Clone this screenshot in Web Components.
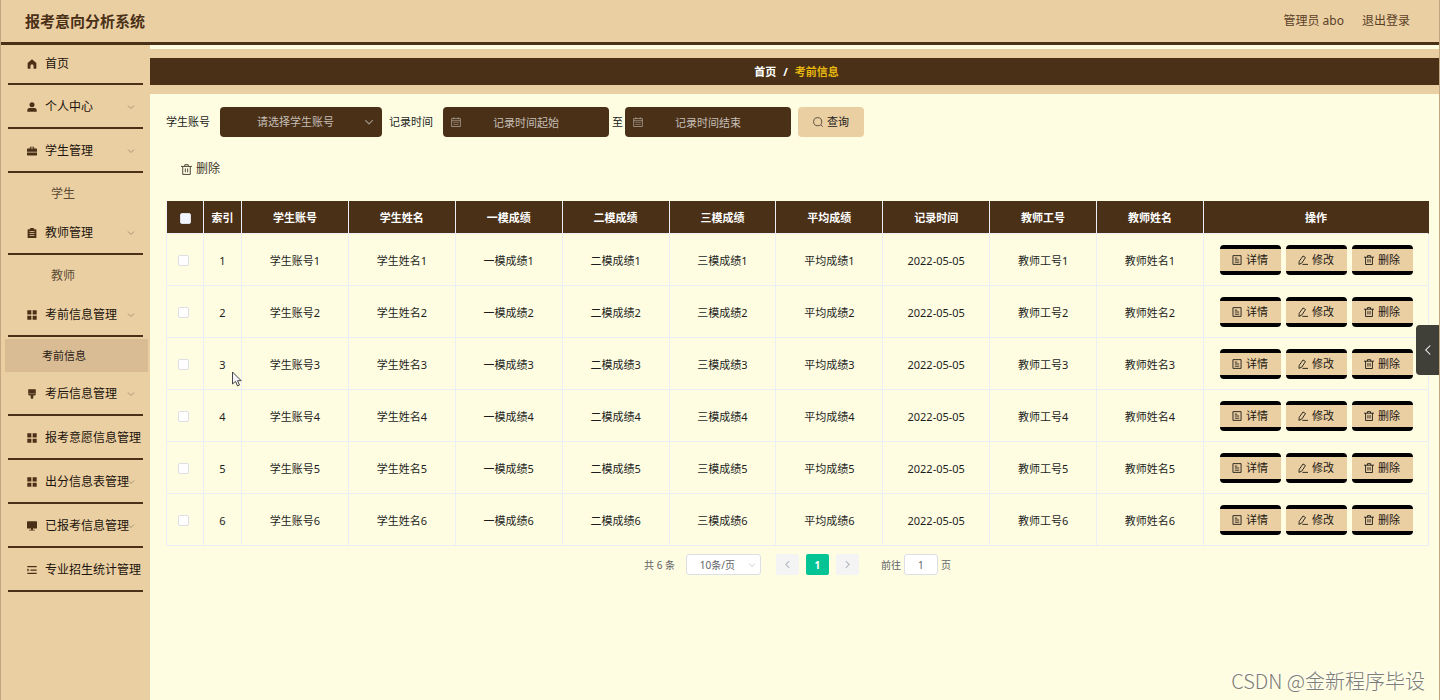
<!DOCTYPE html>
<html lang="zh-CN">
<head>
<meta charset="utf-8">
<meta name="viewport" content="width=device-width, initial-scale=1">
<title>报考意向分析系统</title>
<style>
  :root {
    --tan: #eacfa3;
    --tan-dark: #d9bc94;
    --brown: #4a3017;
    --cream: #fefde2;
    --line: #ebeef5;
    --control-line: #dcdfe6;
    --edge: rgba(75, 48, 23, .25);
  }
  * { box-sizing: border-box; }
  body {
    margin: 0;
    font: 11px/16px "Noto Sans", "Noto Sans CJK SC", sans-serif;
    color: #1d1d1d;
    background: var(--cream);
  }
</style>
</head>
<body>
<admin-app></admin-app>

<script>
const define = (name, html, setup) => {
  const template = document.createElement('template');
  template.innerHTML = `<style>*{box-sizing:border-box} button,input,select{font:inherit;color:inherit;margin:0} button{cursor:pointer} a{color:inherit;text-decoration:none}</style>` + html;
  customElements.define(name, class extends HTMLElement {
    connectedCallback() {
      if (this.shadowRoot) return;
      this.attachShadow({ mode: 'open' }).append(template.content.cloneNode(true));
      if (setup) setup(this, this.shadowRoot);
    }
  });
};

/* Icons: 16-unit grid; "f" shapes are filled, the others are stroked. */
const ICONS = {
  home: ['f', '<path d="M8 .5 1 6.500v8a1 1 0 0 0 1 1h3.500V11a2.500 2.500 0 0 1 5 0v4.500H14a1 1 0 0 0 1-1v-8z"/>'],
  user: ['f', '<circle cx="8" cy="4.500" r="4"/><path d="M.5 15.500V13A3.500 3.500 0 0 1 4 9.500h8a3.500 3.500 0 0 1 3.500 3.500v2.500z"/>'],
  briefcase: ['f', '<path fill-rule="evenodd" d="M4.500 4V2a1 1 0 0 1 1-1h5a1 1 0 0 1 1 1v2H15a1 1 0 0 1 1 1v4H0V5a1 1 0 0 1 1-1zM6 4h4V2.500H6z"/><path d="M0 10.500h16V14a1 1 0 0 1-1 1H1a1 1 0 0 1-1-1z"/>'],
  clipboard: ['f', '<path fill-rule="evenodd" d="M5 0h6v2h3a1 1 0 0 1 1 1v12a1 1 0 0 1-1 1H2a1 1 0 0 1-1-1V3a1 1 0 0 1 1-1h3zM4 5v1.200h8V5zm0 3.200v1.300h8V8.200zm0 3.300v1.300h8v-1.300z"/>'],
  grid: ['f', '<path d="M.5.5h6.500v6.500H.5zM9 .5h6.500v6.500H9zM.5 9h6.500v6.500H.5zM9 9h6.500v6.500H9z"/>'],
  brush: ['f', '<path d="M2 .5h12v8a2 2 0 0 1-2 2h-2v4a1 1 0 0 1-1 1H7a1 1 0 0 1-1-1v-4H4a2 2 0 0 1-2-2z"/><path d="M3 7.500h10" stroke="#eacfa3" stroke-width=".7"/>'],
  screen: ['f', '<path d="M1 .5h14a1 1 0 0 1 1 1V11a1 1 0 0 1-1 1H9.500v1.800h3v1.500h-9v-1.500h3V12H1a1 1 0 0 1-1-1V1.500a1 1 0 0 1 1-1z"/>'],
  list: ['f', '<path d="M.5 1.500h15v2H.5zM5.500 7h10v2h-10zM.5 12.500h15v2H.5zM.5 5.500 4 8 .5 10.500z"/>'],
  down: ['s', '<path d="m2 5 6 6 6-6"/>'],
  left: ['s', '<path d="M11 2 5 8l6 6"/>'],
  right: ['s', '<path d="m5 2 6 6-6 6"/>'],
  search: ['s', '<circle cx="7.500" cy="7.500" r="6.500"/><path d="m12.500 12.500 3 3"/>'],
  trash: ['s', '<path d="M0 3.500h16M5.500 3.500v-2.500h5v2.500M2.500 3.500v11.700h11V3.500M6.300 6.500v5.500M9.700 6.500v5.500"/>'],
  doc: ['s', '<path d="M1.500 1h13v14h-13zM4.500 5h4M4.500 8h7M4.500 11.500h7"/>'],
  edit: ['s', '<path d="m2 10 6-8.500 4 2.500-6 9L1.500 15zM7 15h9"/>'],
  date: ['s', '<path d="M1 2.500h14v12.700H1zM1 6h14M4.500.5v3M11.500.5v3M4 9h2M7 9h2M10 9h2M4 12h2M7 12h2M10 12h2"/>']
};

define('ui-icon', `
  <style>
    :host { display: inline-flex; flex: none; width: 10px; height: 10px; }
    svg { width: 100%; height: 100%; overflow: visible; }
    .f { fill: currentColor; }
    .s { fill: none; stroke: currentColor; stroke-width: var(--stroke, 1.4); }
  </style>
  <svg viewBox="0 0 16 16" aria-hidden="true"></svg>`,
  (host, root) => {
    const [kind, shape] = ICONS[host.getAttribute('name')];
    const svg = root.querySelector('svg');
    svg.classList.add(kind);
    svg.innerHTML = shape;
  });

define('app-header', `
  <style>
    :host {
      display: flex; align-items: center; justify-content: space-between;
      height: 45px; padding: 0 29px 0 24px; color: var(--brown);
      background: var(--tan); border-bottom: 3px solid var(--brown);
    }
    h1 { margin: 0; font-size: 15px; line-height: 20px; font-weight: 600; }
    div { display: flex; gap: 18px; font-size: 12px; opacity: .9; }
  </style>
  <h1>报考意向分析系统</h1>
  <div><span>管理员 abo</span><a href="#logout">退出登录</a></div>`);

define('menu-item', `
  <style>
    :host { display: block; }
    a {
      position: relative; display: flex; align-items: center; gap: 8px;
      height: 44px; padding: 2px 0 0 19px; font-size: 12px; white-space: nowrap;
      color: #1c140c; border-bottom: 2px solid var(--brown);
    }
    :host([first]) a { height: 40px; padding-top: 0; }
    ui-icon { color: var(--brown); }
    .arrow { position: absolute; right: 8px; width: 8px; height: 8px; color: #8d7a5f; }
  </style>
  <a href="#"><slot></slot></a>`,
  (host, root) => {
    const link = root.querySelector('a');
    link.insertAdjacentHTML('afterbegin', `<ui-icon name="${host.getAttribute('icon')}"></ui-icon>`);
    if (host.hasAttribute('expandable')) {
      link.insertAdjacentHTML('beforeend', '<ui-icon class="arrow" name="down"></ui-icon>');
    }
  });

define('sub-item', `
  <style>
    :host { display: block; }
    a {
      display: flex; align-items: center; height: 38px; padding: 3px 0 0 43px;
      font-size: 12px; color: #5c4b36;
    }
    :host([active]) { margin: 2px -5px 0 -3px; }
    :host([active]) a {
      height: 33px; padding: 0 0 0 37px; font-size: 11px;
      color: #2b2015; background: var(--tan-dark);
    }
  </style>
  <a href="#"><slot></slot></a>`);

define('side-menu', `
  <style>
    :host { display: block; width: 149px; flex: none; background: var(--tan); }
    nav { padding: 0 7px; }
  </style>
  <nav>
    <menu-item icon="home" first>首页</menu-item>
    <menu-item icon="user" expandable>个人中心</menu-item>
    <menu-item icon="briefcase" expandable>学生管理</menu-item>
    <sub-item>学生</sub-item>
    <menu-item icon="clipboard" expandable>教师管理</menu-item>
    <sub-item>教师</sub-item>
    <menu-item icon="grid" expandable>考前信息管理</menu-item>
    <sub-item active>考前信息</sub-item>
    <menu-item icon="brush" expandable>考后信息管理</menu-item>
    <menu-item icon="grid">报考意愿信息管理</menu-item>
    <menu-item icon="grid" expandable>出分信息表管理</menu-item>
    <menu-item icon="screen" expandable>已报考信息管理</menu-item>
    <menu-item icon="list">专业招生统计管理</menu-item>
  </nav>`);

define('crumb-bar', `
  <style>
    :host {
      display: block; margin-top: 4px; padding: 9px 0; background: var(--tan);
    }
    nav {
      display: flex; justify-content: center; gap: 7px; height: 27px; padding-left: 4px;
      line-height: 27px; font-weight: 700; color: #fff; background: var(--brown);
    }
    .here { color: #e8b80e; }
  </style>
  <nav aria-label="位置"><a href="#home">首页</a><span>/</span><span class="here">考前信息</span></nav>`);

define('dark-field', `
  <style>
    :host { display: block; position: relative; width: 166px; color: #c4beb6; }
    :host([kind=select]) { width: 162px; }
    input, select {
      display: block; width: 100%; height: 30px; padding: 0 30px; border: 0; border-radius: 4px;
      text-align: center; text-align-last: center; background: var(--brown); outline: 0; appearance: none;
    }
    select { padding: 0 30px 0 19px; }
    input::placeholder { color: inherit; opacity: 1; }
    ui-icon { position: absolute; top: 10px; left: 8px; color: #a4988a; pointer-events: none; }
    :host([kind=select]) ui-icon { left: auto; right: 8px; --stroke: 1.800; }
  </style>`,
  (host, root) => {
    const text = host.getAttribute('placeholder');
    root.append(document.createRange().createContextualFragment(
      host.getAttribute('kind') === 'select'
        ? `<select aria-label="学生账号"><option>${text}</option></select><ui-icon name="down"></ui-icon>`
        : `<input type="text" aria-label="${text}" placeholder="${text}"><ui-icon name="date"></ui-icon>`));
  });

define('filter-bar', `
  <style>
    :host { display: block; }
    form { display: flex; align-items: center; flex-wrap: wrap; }
    label { display: flex; align-items: center; gap: 10px; margin-right: 7px; }
    .range { margin-right: 3px; }
    .to { gap: 2px; }
    form button {
      display: flex; align-items: center; justify-content: center; gap: 4px;
      width: 66px; height: 30px; padding: 0; border: 0; border-radius: 4px; background: var(--tan);
    }
    form button ui-icon, .remove ui-icon { color: #4a4234; }
    .remove {
      display: flex; align-items: center; gap: 4px; height: 30px; margin-top: 17px; padding: 0 15px;
      border: 0; font-size: 12px; color: #3c3529; background: none;
    }
    .remove ui-icon { width: 11px; height: 11px; }
  </style>
  <form onsubmit="return false">
    <label>学生账号<dark-field kind="select" placeholder="请选择学生账号"></dark-field></label>
    <label class="range">记录时间<dark-field placeholder="记录时间起始"></dark-field></label>
    <label class="to">至<dark-field placeholder="记录时间结束"></dark-field></label>
    <button type="submit"><ui-icon name="search"></ui-icon>查询</button>
  </form>
  <button type="button" class="remove"><ui-icon name="trash"></ui-icon>删除</button>`);

define('row-action', `
  <style>
    :host { display: block; }
    button {
      display: flex; align-items: center; justify-content: center; gap: 4px;
      width: 61px; height: 30px; padding: 0; color: #1c1712; background: var(--tan);
      border: solid #000; border-width: 4px 0; border-radius: 4px;
    }
  </style>
  <button type="button"><slot name="icon"></slot><slot></slot></button>`);

define('score-table', `
  <style>
    :host { display: block; }
    table {
      width: 100%; table-layout: fixed; border-collapse: separate; border-spacing: 0;
      text-align: center; border-left: 1px solid var(--line);
    }
    col.check { width: 37px; } col.index { width: 38px; } col.ops { width: 225px; }
    th, td { padding: 2px 0 0; border-right: 1px solid var(--line); border-bottom: 1px solid var(--line); }
    th { height: 33px; color: #fff; font-weight: 700; background: var(--brown); }
    th:last-child { border-right-color: var(--brown); }
    td { height: 52px; }
    td:last-child { padding-top: 0; }
    input {
      appearance: none; display: block; width: 11px; height: 11px; margin: 0 auto;
      border: 1px solid var(--control-line); border-radius: 2px; background: #fff;
    }
    td:first-child { padding-right: 3px; }
    th input { background: #f2f4fd; }
    .actions { display: flex; justify-content: center; gap: 5px; }
  </style>
  <table>
    <colgroup><col class="check"><col class="index"><col span="9"><col class="ops"></colgroup>
    <thead><tr><th><input type="checkbox" aria-label="全选"></th></tr></thead>
    <tbody></tbody>
  </table>`,
  (host, root) => {
    const heads = ['索引', '学生账号', '学生姓名', '一模成绩', '二模成绩', '三模成绩', '平均成绩', '记录时间', '教师工号', '教师姓名', '操作'];
    root.querySelector('thead tr').insertAdjacentHTML('beforeend', heads.map(h => `<th>${h}</th>`).join(''));
    const actions = [['doc', '详情'], ['edit', '修改'], ['trash', '删除']]
      .map(([icon, text]) => `<row-action><ui-icon slot="icon" name="${icon}"></ui-icon>${text}</row-action>`).join('');
    root.querySelector('tbody').innerHTML = [1, 2, 3, 4, 5, 6].map(n => `<tr>
      <td><input type="checkbox" aria-label="选择 ${n}"></td><td>${n}</td>` +
      heads.slice(1, -1).map(h => `<td>${h === '记录时间' ? '2022-05-05' : h + n}</td>`).join('') +
      `<td><div class="actions">${actions}</div></td></tr>`).join('');
  });

define('page-nav', `
  <style>
    :host {
      display: flex; align-items: center; justify-content: center; margin-top: 8px;
      font-size: 10px; color: #606266;
    }
    .size { position: relative; width: 75px; margin: 0 15px 0 11px; }
    select, input {
      display: block; width: 100%; height: 21px; padding: 0; border: 1px solid var(--control-line); border-radius: 3px;
      background: #fff; text-align: center; text-align-last: center; appearance: none; outline: 0;
    }
    select { padding-right: 12px; }
    .size ui-icon { position: absolute; right: 5px; top: 7px; width: 8px; height: 8px; color: #b4b8c0; }
    button {
      display: flex; align-items: center; justify-content: center;
      width: 23px; height: 21px; padding: 0; border: 0; border-radius: 2px; background: #f4f4f5; color: #b4b8c0;
      --stroke: 2;
    }
    button ui-icon { width: 9px; height: 9px; }
    .pages { display: flex; gap: 7px; margin-right: 22px; }
    .pages .on { color: #fff; font-weight: 700; background: #04c394; }
    label { display: flex; align-items: center; gap: 3px; }
    label input { width: 34px; }
  </style>
  <span>共 6 条</span>
  <div class="size"><select aria-label="每页条数"><option>10条/页</option></select><ui-icon name="down"></ui-icon></div>
  <div class="pages">
    <button type="button" aria-label="上一页"><ui-icon name="left"></ui-icon></button>
    <button type="button" class="on">1</button>
    <button type="button" aria-label="下一页"><ui-icon name="right"></ui-icon></button>
  </div>
  <label>前往<input type="text" value="1">页</label>`);

define('admin-app', `
  <style>
    :host {
      display: flex; flex-direction: column; position: relative; min-height: 100vh; overflow: hidden;
      border: solid var(--edge); border-width: 0 1px; background: var(--tan);
    }
    .body { display: flex; flex: 1; }
    main { flex: 1; min-width: 0; background: var(--cream); }
    crumb-bar { border-top: 0; }
    .content { padding: 13px 10px 0 16px; }
    score-table { margin-top: 17px; }
    .drawer {
      position: absolute; right: -1px; top: 325px; display: flex; align-items: center; justify-content: center;
      width: 24px; height: 50px; padding: 0; border: 0; border-radius: 4px 0 0 4px; color: #fff; background: #403f38;
    }
    .drawer ui-icon { width: 12px; height: 12px; }
    .mark {
      position: absolute; right: 14px; bottom: 4px; font-family: "Noto Sans CJK SC", sans-serif;
      font-size: 20px; line-height: 30px; font-weight: 300;
      color: #7d7c75; text-shadow: -1px -1px 0 #fff;
    }
    .pointer { position: absolute; left: 230px; top: 371px; width: 12px; height: 17px; }
  </style>
  <app-header></app-header>
  <div class="body">
    <side-menu></side-menu>
    <main>
      <crumb-bar></crumb-bar>
      <div class="content">
        <filter-bar></filter-bar>
        <score-table></score-table>
        <page-nav></page-nav>
      </div>
    </main>
  </div>
  <button type="button" class="drawer" aria-label="展开"><ui-icon name="left"></ui-icon></button>
  <svg class="pointer" viewBox="0 0 12 17" aria-hidden="true"><path d="M1.500 1v12l3-2.600 2 4.600 2-1-2-4.300h3.700z" fill="#f4f4fa" stroke="#444" stroke-width="1"/></svg>
  <span class="mark">CSDN @金新程序毕设</span>`);
</script>
</body>
</html>
